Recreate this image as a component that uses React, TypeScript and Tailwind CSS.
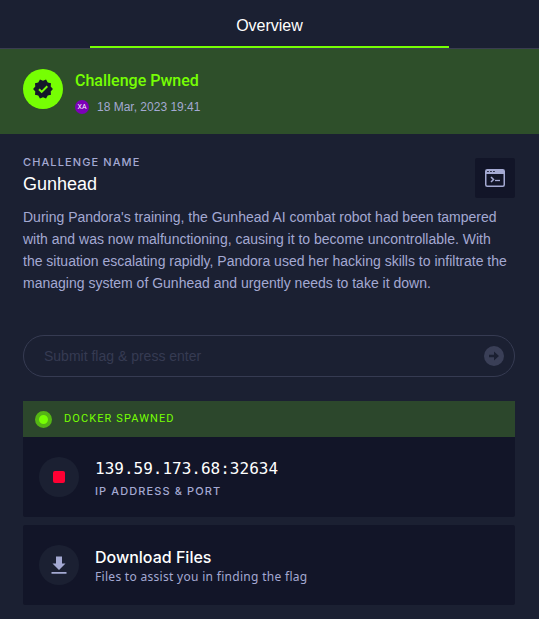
import React from "react";

function VerifiedIcon() {
  return (
    <svg viewBox="0 0 24 24" className="size-6 text-[#141829]" fill="currentColor" aria-hidden="true">
      <path d="M23 12l-2.440-2.790.34-3.690-3.610-.82-1.890-3.200L12 2.960 8.600 1.500 6.710 4.690 3.100 5.500l.34 3.700L1 12l2.440 2.790-.34 3.700 3.610.82L8.600 22.500l3.400-1.470 3.400 1.460 1.890-3.190 3.610-.82-.34-3.690L23 12z" transform="translate(1.200 1.200) scale(.9)" />
      <path d="M8 12.200l2.700 2.700 5.600-5.600" fill="none" stroke="#76ff03" strokeWidth="2" />
    </svg>
  );
}

function TerminalIcon() {
  return (
    <svg viewBox="0 0 20 18" className="h-[18px] w-5" aria-hidden="true">
      <rect x="0.75" y="0.75" width="18.500" height="16.500" rx="1.500" fill="none" stroke="#a4a9d2" strokeWidth="1.500" />
      <path d="M1 1h18v4H1z" fill="#a4a9d2" />
      <path d="M2.200 2.500h1.500M5.200 2.500h1.500M8.200 2.500h1.500" stroke="#121528" strokeWidth="1.200" />
      <path d="M6 8l2.500 2.500L6 13" fill="none" stroke="#a4a9d2" strokeWidth="1.500" />
      <path d="M10 11.500h5" stroke="#a4a9d2" strokeWidth="1.300" />
    </svg>
  );
}

function ArrowIcon() {
  return (
    <svg viewBox="0 0 20 20" className="size-5" aria-hidden="true">
      <circle cx="10" cy="10" r="10" fill="#3a3f57" />
      <path d="M5 8.700h5V5.500l5 4.500-5 4.500v-3.200H5z" fill="#1b2032" />
    </svg>
  );
}

function DownloadIcon() {
  return (
    <svg viewBox="0 0 16 18" className="h-[18px] w-4" fill="#a4a9d2" aria-hidden="true">
      <path d="M5 0.500h6v7h3.500L8 14 1.500 7.500H5zM0.500 16h15v1.800h-15z" />
    </svg>
  );
}

export default function App() {
  return (
    <main className="min-h-screen bg-[#1b2032] font-['Liberation_Sans',sans-serif] text-[#a4a9d2]">
      <nav className="flex justify-center border-b border-[#3a3d50]">
        <button type="button" className="h-12 w-2/3 border-b-2 border-[#76ff03] pt-[6px] text-base text-white">
          Overview
        </button>
      </nav>

      <section className="flex gap-3 bg-[#2e4f2a] pt-5 pr-6 pb-[17px] pl-[23px]">
        <div className="flex size-10 shrink-0 items-center justify-center rounded-full bg-[#76ff03]">
          <VerifiedIcon />
        </div>
        <div>
          <h2 className="font-['Roboto',sans-serif] text-base leading-6 font-medium text-[#76ff03]">Challenge Pwned</h2>
          <div className="mt-1 flex h-5 items-center gap-2 text-xs">
            <span className="flex size-[14px] items-center justify-center rounded-full bg-[#7c00b8] font-['Roboto',sans-serif] text-[7px] leading-none text-white">
              XA
            </span>
            <time dateTime="2023-03-18T19:41">18 Mar, 2023 19:41</time>
          </div>
        </div>
      </section>

      <div className="pt-5 pr-6 pb-3 pl-[23px]">
        <header className="flex items-start justify-between">
          <div>
            <p className="font-['Inter',sans-serif] text-[11px] leading-4 font-medium tracking-widest uppercase">Challenge name</p>
            <h1 className="text-lg leading-7 text-white">Gunhead</h1>
          </div>
          <div className="mt-1 flex size-10 items-center justify-center rounded-xs bg-[#121528]">
            <TerminalIcon />
          </div>
        </header>
        <p className="mt-2 pr-1 text-sm leading-[22px]">
          During Pandora's training, the Gunhead AI combat robot had been tampered with and was now malfunctioning, causing it to become uncontrollable. With the situation escalating rapidly, Pandora used her hacking skills to infiltrate the managing system of Gunhead and urgently needs to take it down.
        </p>

        <form className="mt-[41px] flex h-[42px] items-center rounded-full border border-[#363b52] pr-[10px] pl-5">
          <input
            type="text"
            aria-label="Submit flag"
            placeholder="Submit flag & press enter"
            className="min-w-0 flex-1 bg-transparent text-sm outline-none placeholder:text-[#363b52]"
          />
          <button type="submit" aria-label="Submit">
            <ArrowIcon />
          </button>
        </form>

        <section className="mt-6">
          <div className="flex h-9 items-center gap-3 bg-[#2c472c] px-3 font-['Roboto',sans-serif] text-[11px] tracking-widest text-[#76ff03] uppercase">
            <span className="size-[17px] rounded-full border-4 border-[#55b515] bg-[#76ff03]" />
            Docker spawned
          </div>
          <div className="flex h-20 items-center gap-4 rounded-b-xs bg-[#121528] px-4">
            <button type="button" aria-label="Stop" className="flex size-10 items-center justify-center rounded-full bg-[#1b2032]">
              <span className="size-3 rounded-xs bg-[#ff0033]" />
            </button>
            <div className="pt-1">
              <p className="font-['DejaVu_Sans_Mono',monospace] text-base leading-6 text-white">139.59.173.68:32634</p>
              <p className="font-['Inter',sans-serif] text-[11px] leading-5 font-medium tracking-widest uppercase">IP address &amp; port</p>
            </div>
          </div>
        </section>

        <section className="mt-2 flex h-20 items-center gap-4 rounded-xs bg-[#121528] px-4">
          <button type="button" aria-label="Download" className="flex size-10 items-center justify-center rounded-full bg-[#1b2032]">
            <DownloadIcon />
          </button>
          <div className="pt-1">
            <h2 className="font-['Inter',sans-serif] text-base leading-5 font-medium text-white">Download Files</h2>
            <p className="font-['Noto_Sans',sans-serif] text-xs leading-5 tracking-wide">Files to assist you in finding the flag</p>
          </div>
        </section>
      </div>
    </main>
  );
}
